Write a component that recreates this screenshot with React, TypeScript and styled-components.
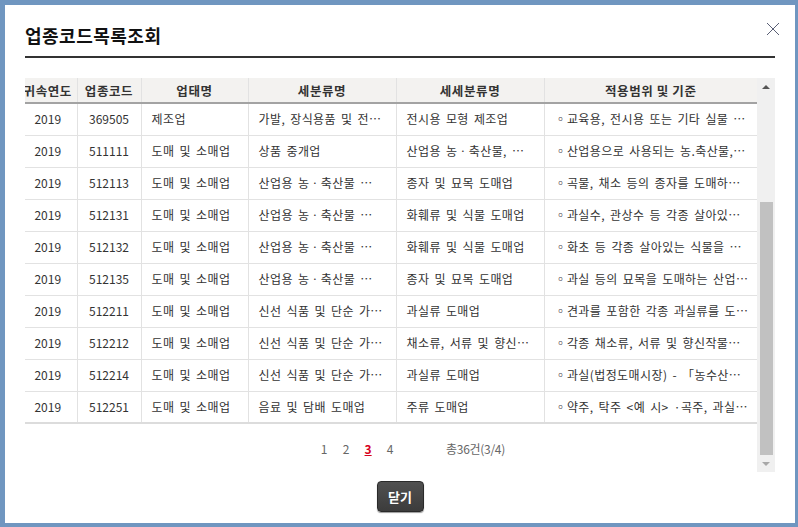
import React from 'react';
import styled, { createGlobalStyle } from 'styled-components';

const GlobalStyle = createGlobalStyle`
  html, body {
    margin: 0;
    padding: 0;
    background: #7096c0;
  }
  * {
    box-sizing: border-box;
  }
`;

const Frame = styled.div`
  width: 798px;
  height: 527px;
  border-style: solid;
  border-color: #7096c0;
  border-width: 5px 3px 4px 5px;
  background: #fff;
  font-family: "Noto Sans CJK KR", "Noto Sans", sans-serif;
  color: #333;
  padding: 0 20px;
  position: relative;
`;

const TitleBar = styled.div`
  display: flex;
  align-items: center;
  padding: 20px 0 11px;
  border-bottom: 2px solid #333;
`;

const Title = styled.h1`
  margin: 0;
  font-size: 18px;
  line-height: 20px;
  font-weight: 700;
  color: #111;
  letter-spacing: 0.5px;
`;

const CloseButton = styled.button`
  position: absolute;
  top: 16px;
  right: 14px;
  width: 16px;
  height: 16px;
  padding: 0;
  border: none;
  background: none;
  cursor: pointer;
  display: flex;
`;

const ScrollBox = styled.div`
  margin-top: 20px;
  height: 394px;
  display: flex;
`;

const Content = styled.div`
  flex: 1;
  overflow: hidden;
  display: flex;
  flex-direction: column;
`;

const Table = styled.table`
  border-collapse: collapse;
  table-layout: fixed;
  width: 738px;
  margin-left: -6px;
  font-size: 12px;
  border-bottom: 2px solid #dcdcdc;
`;

const Th = styled.th<{ $w: number }>`
  width: ${p => p.$w}px;
  height: 25px;
  padding: 0;
  background: #f3f2f0;
  border-left: 1px solid #e2e2e2;
  border-bottom: 2px solid #a3a3a3;
  font-size: 12.5px;
  font-weight: 700;
  color: #333;
  text-align: center;
  white-space: nowrap;
  overflow: hidden;
  letter-spacing: 0.6px;
  &:first-child {
    border-left: none;
  }
`;

const Td = styled.td<{ $center?: boolean }>`
  height: 32px;
  padding: 0 ${p => (p.$center ? 0 : 10)}px;
  border-left: 1px solid #e2e2e2;
  border-bottom: 1px solid #e2e2e2;
  text-align: ${p => (p.$center ? 'center' : 'left')};
  white-space: nowrap;
  overflow: hidden;
  color: #333;
  line-height: 16px;
  letter-spacing: ${p => (p.$center ? 0 : 0.4)}px;
  word-spacing: 2px;
  &:first-child {
    border-left: none;
  }
`;

const Paging = styled.div`
  flex: 1;
  display: flex;
  align-items: center;
  justify-content: center;
  padding-left: 36px;
  font-size: 12px;
  color: #666;
`;

const PageNum = styled.a<{ $active?: boolean }>`
  width: 22px;
  text-align: center;
  color: ${p => (p.$active ? '#d6001c' : '#666')};
  font-weight: ${p => (p.$active ? 700 : 400)};
  text-decoration: ${p => (p.$active ? 'underline' : 'none')};
  cursor: pointer;
`;

const Total = styled.span`
  margin-left: 45px;
  color: #666;
  letter-spacing: -0.3px;
`;

const ScrollTrack = styled.div`
  width: 18px;
  background: #f0f0f0;
  display: flex;
  flex-direction: column;
  align-items: center;
`;

const Arrow = styled.div<{ $down?: boolean; $color: string }>`
  height: 17px;
  width: 100%;
  display: flex;
  align-items: center;
  justify-content: center;
  &::after {
    content: '';
    border-left: 4px solid transparent;
    border-right: 4px solid transparent;
    ${p =>
      p.$down
        ? `border-top: 4px solid ${p.$color};`
        : `border-bottom: 4px solid ${p.$color};`}
  }
`;

const Track = styled.div`
  flex: 1;
  width: 13px;
  display: flex;
  flex-direction: column;
  justify-content: flex-end;
`;

const Thumb = styled.div`
  height: 253px;
  background: #c1c1c1;
`;

const Footer = styled.div`
  display: flex;
  justify-content: center;
  margin-top: 9px;
`;

const CloseBtn = styled.button`
  width: 47px;
  height: 31px;
  border: 1px solid #2a2a2a;
  border-radius: 4px;
  background: linear-gradient(#505050, #3c3c3c);
  box-shadow: 0 1px 1px rgba(0, 0, 0, 0.4);
  color: #fff;
  font-family: "Noto Sans CJK KR", sans-serif;
  font-size: 13px;
  font-weight: 700;
  cursor: pointer;
  padding: 0;
`;

const columns = [
  { title: '귀속연도', w: 58 },
  { title: '업종코드', w: 64 },
  { title: '업태명', w: 107 },
  { title: '세분류명', w: 148 },
  { title: '세세분류명', w: 148 },
  { title: '적용범위 및 기준', w: 213 },
];

const rows = [
  ['369505', '제조업', '가발, 장식용품 및 전…', '전시용 모형 제조업', '◦교육용, 전시용 또는 기타 실물 …'],
  ['511111', '도매 및 소매업', '상품 중개업', '산업용 농ㆍ축산물, …', '◦산업용으로 사용되는 농.축산물,…'],
  ['512113', '도매 및 소매업', '산업용 농ㆍ축산물 …', '종자 및 묘목 도매업', '◦곡물, 채소 등의 종자를 도매하…'],
  ['512131', '도매 및 소매업', '산업용 농ㆍ축산물 …', '화훼류 및 식물 도매업', '◦과실수, 관상수 등 각종 살아있…'],
  ['512132', '도매 및 소매업', '산업용 농ㆍ축산물 …', '화훼류 및 식물 도매업', '◦화초 등 각종 살아있는 식물을 …'],
  ['512135', '도매 및 소매업', '산업용 농ㆍ축산물 …', '종자 및 묘목 도매업', '◦과실 등의 묘목을 도매하는 산업…'],
  ['512211', '도매 및 소매업', '신선 식품 및 단순 가…', '과실류 도매업', '◦견과를 포함한 각종 과실류를 도…'],
  ['512212', '도매 및 소매업', '신선 식품 및 단순 가…', '채소류, 서류 및 향신…', '◦각종 채소류, 서류 및 향신작물…'],
  ['512214', '도매 및 소매업', '신선 식품 및 단순 가…', '과실류 도매업', '◦과실(법정도매시장) - 「농수산…'],
  ['512251', '도매 및 소매업', '음료 및 담배 도매업', '주류 도매업', '◦약주, 탁주 <예 시> ·곡주, 과실…'],
];

const App: React.FC = () => {
  return (
    <>
      <GlobalStyle />
      <Frame>
        <TitleBar>
          <Title>업종코드목록조회</Title>
        </TitleBar>
        <CloseButton aria-label="닫기">
          <svg width="16" height="16" viewBox="0 0 16 16">
            <path d="M2 2L14 14M14 2L2 14" stroke="#5a5f75" strokeWidth="1" />
          </svg>
        </CloseButton>

        <ScrollBox>
          <Content>
            <Table>
              <thead>
                <tr>
                  {columns.map(c => (
                    <Th key={c.title} $w={c.w}>{c.title}</Th>
                  ))}
                </tr>
              </thead>
              <tbody>
                {rows.map(r => (
                  <tr key={r[0]}>
                    <Td $center>2019</Td>
                    <Td $center>{r[0]}</Td>
                    <Td>{r[1]}</Td>
                    <Td>{r[2]}</Td>
                    <Td>{r[3]}</Td>
                    <Td>{r[4]}</Td>
                  </tr>
                ))}
              </tbody>
            </Table>
            <Paging>
              <PageNum>1</PageNum>
              <PageNum>2</PageNum>
              <PageNum $active>3</PageNum>
              <PageNum>4</PageNum>
              <Total>총36건(3/4)</Total>
            </Paging>
          </Content>
          <ScrollTrack>
            <Arrow $color="#555" />
            <Track>
              <Thumb />
            </Track>
            <Arrow $down $color="#a8a8a8" />
          </ScrollTrack>
        </ScrollBox>

        <Footer>
          <CloseBtn>닫기</CloseBtn>
        </Footer>
      </Frame>
    </>
  );
};

export default App;
